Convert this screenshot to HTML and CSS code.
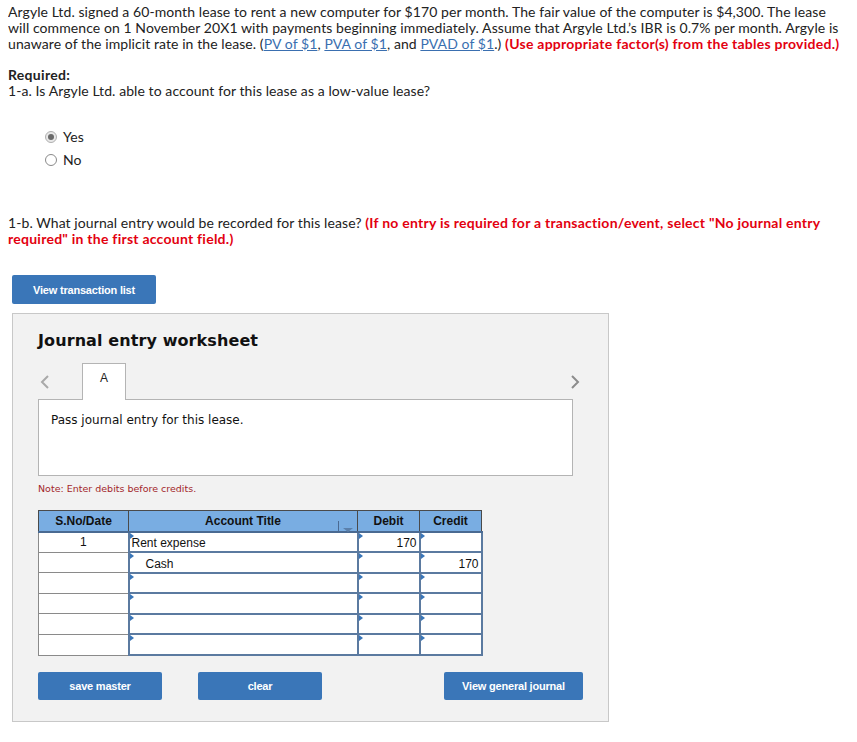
FILE: index.html
```html
<!DOCTYPE html>
<html>
<head>
<meta charset="utf-8">
<link rel="stylesheet" href="styles.css">
</head>
<body>
<p class="intro">Argyle Ltd. signed a 60-month lease to rent a new computer for $170 per month. The fair value of the computer is $4,300. The lease will commence on 1 November 20X1 with payments beginning immediately. Assume that Argyle Ltd.’s IBR is 0.7% per month. Argyle is unaware of the implicit rate in the lease. (<a href="#">PV of $1</a>, <a href="#">PVA of $1</a>, and <a href="#">PVAD of $1</a>.) <b class="red">(Use appropriate factor(s) from the tables provided.)</b></p>

<p class="req"><b>Required:</b><br>1-a. Is Argyle Ltd. able to account for this lease as a low-value lease?</p>

<div class="radios">
  <div class="radio-row"><span class="radio checked"></span><span>Yes</span></div>
  <div class="radio-row"><span class="radio"></span><span>No</span></div>
</div>

<p class="q1b">1-b. What journal entry would be recorded for this lease? <b class="red">(If no entry is required for a transaction/event, select "No journal entry required" in the first account field.)</b></p>

<button class="btn btn-list">View transaction list</button>

<div class="panel">
  <h2 class="ws-title">Journal entry worksheet</h2>
  <div class="tabs">
    <span class="chev chev-left"><svg width="10" height="14" viewBox="0 0 10 14"><path d="M8 1 L2 7 L8 13" fill="none" stroke="#a9a9a9" stroke-width="2"/></svg></span>
    <span class="tab">A</span>
    <span class="chev chev-right"><svg width="10" height="14" viewBox="0 0 10 14"><path d="M2 1 L8 7 L2 13" fill="none" stroke="#8c8c8c" stroke-width="2"/></svg></span>
  </div>
  <div class="content-box">Pass journal entry for this lease.</div>
  <div class="note">Note: Enter debits before credits.</div>

  <table class="je">
    <colgroup>
      <col class="w-date"><col class="w-acct"><col class="w-amt"><col class="w-amt">
    </colgroup>
    <thead>
      <tr>
        <th>S.No/Date</th>
        <th class="c-acct">Account Title<span class="resizer"></span><span class="dd"></span></th>
        <th>Debit</th>
        <th>Credit</th>
      </tr>
    </thead>
    <tbody>
      <tr><td class="date">1</td><td class="in">Rent expense</td><td class="in num">170</td><td class="in num"></td></tr>
      <tr><td class="date"></td><td class="in indent">Cash</td><td class="in num"></td><td class="in num">170</td></tr>
      <tr><td class="date"></td><td class="in"></td><td class="in"></td><td class="in"></td></tr>
      <tr><td class="date"></td><td class="in"></td><td class="in"></td><td class="in"></td></tr>
      <tr><td class="date"></td><td class="in"></td><td class="in"></td><td class="in"></td></tr>
      <tr><td class="date"></td><td class="in"></td><td class="in"></td><td class="in"></td></tr>
    </tbody>
  </table>

  <div class="actions">
    <button class="btn btn-save">save master</button>
    <button class="btn btn-clear">clear</button>
    <button class="btn btn-view">View general journal</button>
  </div>
</div>
</body>
</html>
```
FILE: styles.css
```css
body {
  margin: 4px 8px 8px 8px;
  font-family: "Lato", "Liberation Sans", sans-serif;
  font-size: 14px;
  line-height: 16px;
  letter-spacing: 0.08px;
  color: #222;
  background: #fff;
}
p { margin: 0; }
a { color: #3a6fb0; text-decoration: underline; }
.red { color: #e3000f; font-weight: 700; letter-spacing: 0.25px; }
.req { margin-top: 15px; }
.req b { font-weight: 700; letter-spacing: 0.3px; }

.radios { margin: 30px 0 0 37px; display: flex; flex-direction: column; gap: 7px; }
.radio-row { display: flex; align-items: center; gap: 6px; height: 16px; }
.radio {
  width: 12px; height: 12px; border: 1px solid #8a8a8a; border-radius: 50%;
  box-sizing: border-box; background: #fff; position: relative;
}
.radio.checked { border-color: #b0b0b0; background: #e8e8e8; }
.radio.checked::after {
  content: ""; position: absolute; left: 2px; top: 2px; width: 6px; height: 6px;
  border-radius: 50%; background: #6a6a6a;
}

.q1b { margin-top: 47px; }

.btn {
  background: #3a76b8; color: #fff; border: none; border-radius: 2px;
  font-family: "Liberation Sans", Arial, sans-serif; font-weight: 700; font-size: 11px;
  letter-spacing: -0.2px; cursor: pointer; padding: 0; flex-shrink: 0;
}
.btn-list { display: block; margin: 28px 0 0 4px; width: 144px; height: 29px; }

.panel {
  margin: 9px 0 0 4px; width: 597px; box-sizing: border-box;
  background: #f2f2f2; border: 1px solid #c8c8c8;
  padding: 17px 25px 21px 25px;
  letter-spacing: 0;
}
.ws-title {
  margin: 0; font-family: "DejaVu Sans", Verdana, sans-serif; font-weight: 700;
  font-size: 16px; line-height: 20px; color: #111; letter-spacing: 0.1px;
}
.tabs { display: flex; align-items: center; height: 37px; margin-top: 12px; width: 545px; }
.chev { display: flex; width: 10px; height: 14px; }
.chev-left { margin-left: 2px; }
.tab {
  margin-left: 32px; width: 44px; height: 37px; box-sizing: border-box;
  border: 1px solid #b4b4b4; border-bottom: none; background: #fff;
  font-family: "Liberation Sans", Arial, sans-serif; font-size: 12px;
  display: flex; justify-content: center; padding-top: 6px; position: relative; z-index: 1;
}
.chev-right { margin-left: auto; margin-right: 3px; }
.content-box {
  margin-top: -1px; width: 535px; height: 77px; box-sizing: border-box;
  background: #fff; border: 1px solid #b4b4b4;
  font-family: "DejaVu Sans", Verdana, sans-serif; font-size: 12px; line-height: 16px;
  padding: 12px 12px; color: #111;
}
.note {
  margin-top: 7px; font-family: "DejaVu Sans", Verdana, sans-serif; font-size: 9.5px;
  line-height: 12px; color: #a3262b;
}

.je {
  margin-top: 15px; border-collapse: collapse; table-layout: fixed; width: 443px;
  font-family: "Liberation Sans", Arial, sans-serif; font-size: 12px; color: #111;
}
.w-date { width: 90px; }
.w-acct { width: 229px; }
.w-amt { width: 62px; }
.je thead tr { height: 21px; }
.je th {
  background: #79ade2; padding: 0; font-weight: 700; font-size: 12px;
  border: 1px solid #4a4a4a; border-bottom: 2px solid #4a6a92;
}
.c-acct { position: relative; }
.resizer {
  position: absolute; left: 209px; top: 10px; width: 1px; height: 16px; background: #4a6a92;
}
.dd {
  position: absolute; left: 214px; top: 17px; width: 0; height: 0;
  border-left: 5px solid transparent; border-right: 5px solid transparent;
  border-top: 4px solid #5b80ab;
}
.je tbody tr { height: 20.6px; }
.je td { padding: 0 2px; background: #fff; line-height: 14px; }
.je td.date { border: 1px solid #8a8a8a; text-align: center; vertical-align: top; padding-top: 2px; }
.je td.in { border: 2px solid #5b7aa0; position: relative; vertical-align: bottom; padding-bottom: 1px; }
.je td.in::before {
  content: ""; position: absolute; left: 0; top: 0; width: 0; height: 0;
  border-top: 3px solid transparent; border-bottom: 3px solid transparent;
  border-left: 4px solid #3a76b8;
}
.je td.indent { padding-left: 16px; }
.je td.num { text-align: right; }

.actions { display: flex; margin-top: 16px; height: 28px; }
.actions .btn { height: 28px; }
.btn-save { width: 124px; }
.btn-clear { width: 124px; margin-left: 36px; }
.btn-view { width: 139px; margin-left: 122px; }
```
